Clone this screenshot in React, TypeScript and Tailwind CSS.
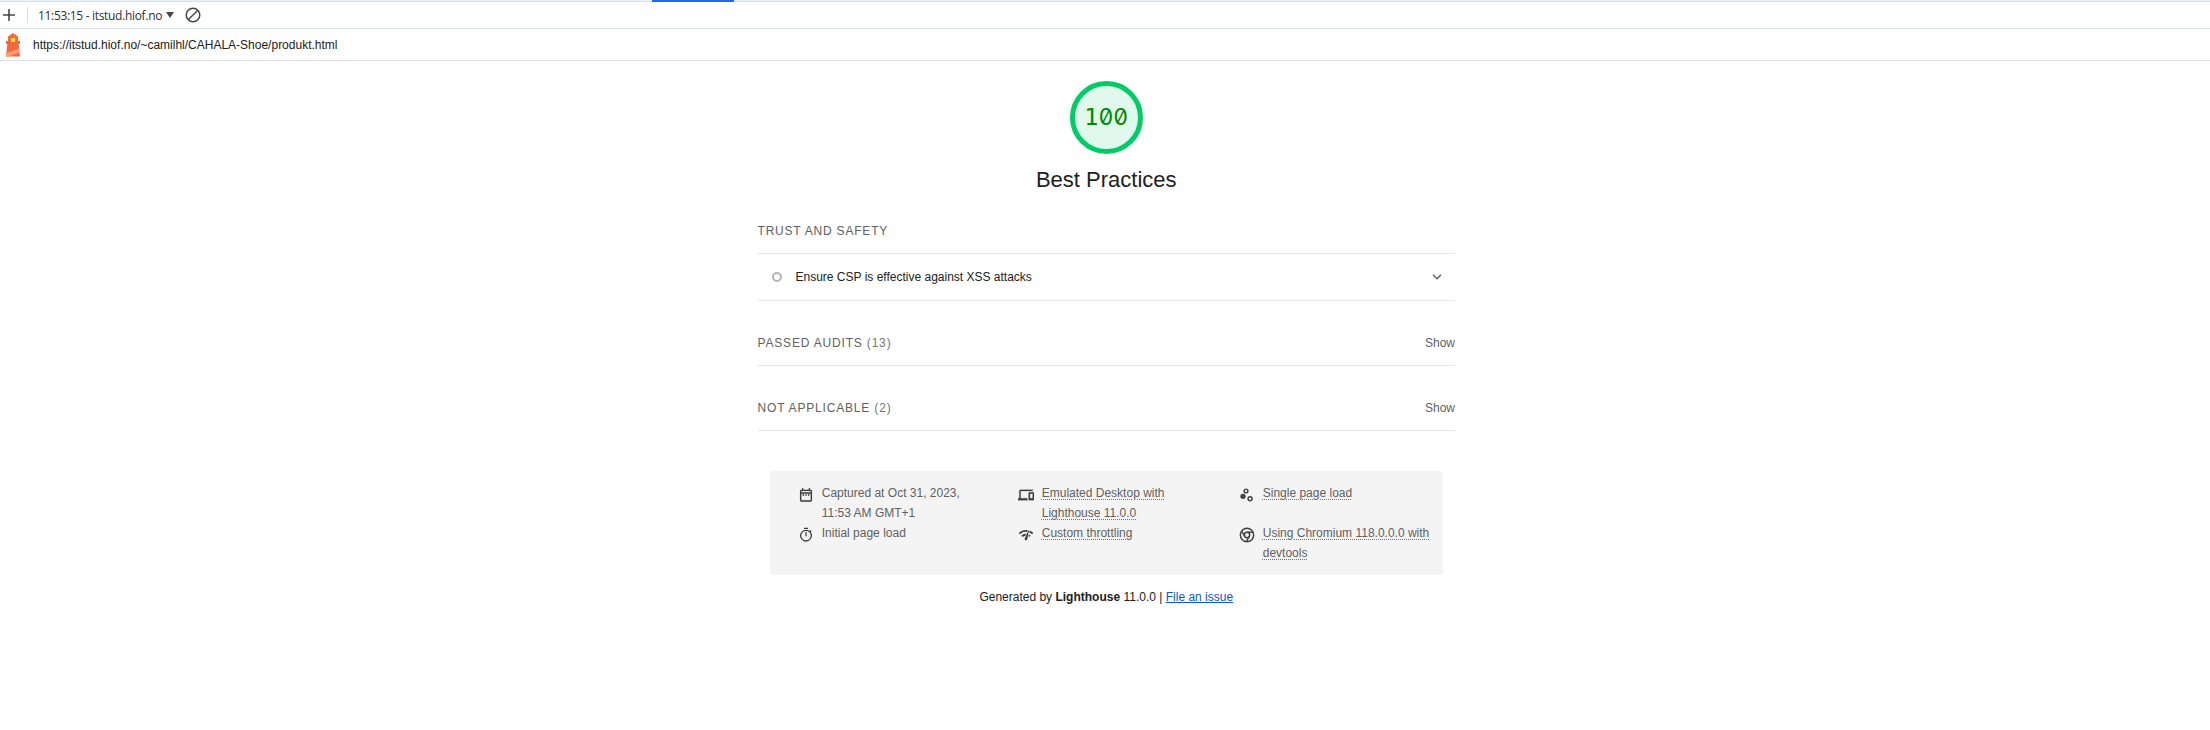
import type { ReactNode } from "react";

function Icon({ children }: { children: ReactNode }) {
  return (
    <svg viewBox="0 0 24 24" className="mt-[4px] h-4 w-4 shrink-0 fill-[#424242]">
      {children}
    </svg>
  );
}

const icons = {
  date: (
    <path stroke="#424242" strokeWidth=".2" d="M7 11h2v2H7zm14-5v14a2 2 0 0 1-2 2H5a2 2 0 0 1-2-2l.01-14c0-1.1.88-2 1.99-2h1V2h2v2h8V2h2v2h1a2 2 0 0 1 2 2zM5 8h14V6H5v2zm14 12V10H5v10h14zm-4-7h2v-2h-2v2zm-4 0h2v-2h-2v2z" />
  ),
  devices: (
    <path stroke="#424242" strokeWidth=".4" d="M4 6h18V4H4c-1.1 0-2 .9-2 2v11H0v3h14v-3H4V6zm19 2h-6c-.55 0-1 .45-1 1v10c0 .55.45 1 1 1h6c.55 0 1-.45 1-1V9c0-.55-.45-1-1-1zm-1 9h-4v-7h4v7z" />
  ),
  samples: (
    <>
      <circle cx="6" cy="14" r="4" />
      <circle cx="10.5" cy="6" r="2.8" fill="none" stroke="#424242" strokeWidth="2.2" />
      <circle cx="16.6" cy="17.6" r="3" fill="none" stroke="#424242" strokeWidth="2.2" />
    </>
  ),
  stopwatch: (
    <path d="M15 1H9v2h6V1zm-4 13h2V8h-2v6zm8.03-6.61 1.42-1.42c-.43-.51-.9-.99-1.41-1.41l-1.42 1.42A8.96 8.96 0 0 0 12 4a9 9 0 1 0 7.03 3.39zM12 20a7 7 0 1 1 0-14 7 7 0 0 1 0 14z" />
  ),
  network: (
    <path d="M15.9 5c-.17 0-.32.09-.41.23l-.07.15-5.18 11.65c-.16.29-.26.61-.26.96 0 1.11.9 2.01 2.01 2.01.96 0 1.77-.68 1.96-1.59l.01-.03L16.4 5.5c0-.28-.22-.5-.5-.5zM1 9l2 2c2.88-2.88 6.79-4.08 10.53-3.62l1.19-2.68C9.89 3.84 4.74 5.27 1 9zm20 2 2-2c-1.64-1.64-3.55-2.82-5.59-3.57l-.53 2.82c1.5.62 2.9 1.53 4.12 2.75zm-4 4 2-2c-.8-.8-1.7-1.42-2.66-1.89l-.55 2.92c.42.27.83.59 1.21.97zM5 13l2 2c1.13-1.13 2.56-1.79 4.03-2l1.28-2.88c-2.63-.08-5.3.87-7.31 2.88z" />
  ),
  chrome: (
    <g fill="none" stroke="#424242" strokeWidth="2.2">
      <circle cx="12" cy="12" r="10" />
      <circle cx="12" cy="12" r="4" />
      <path d="M12 8h9.2M8.54 14 3.9 6M15.46 14l-4.6 8" />
    </g>
  ),
};

function MetaItem({ icon, link, children }: { icon: keyof typeof icons; link?: boolean; children: ReactNode }) {
  return (
    <li className="flex gap-2">
      <Icon>{icons[icon]}</Icon>
      <span className="leading-5">
        {link ? (
          <span className="underline decoration-[#757575] decoration-dotted decoration-1 underline-offset-2">{children}</span>
        ) : (
          children
        )}
      </span>
    </li>
  );
}

function ClumpHeader({ title, count }: { title: string; count: number }) {
  return (
    <div className="flex h-[65px] items-end justify-between border-b border-[#e8e8e8] pb-[12px] leading-5 text-[#616161]">
      <span className="tracking-[0.82px]">
        {title} <span className="text-[#757575]">({count})</span>
      </span>
      <span>Show</span>
    </div>
  );
}

function Lighthouse() {
  return (
    <svg viewBox="0 0 16 24" className="h-6 w-4">
      <path d="M8 0 13 3.5V8h2v3h-1.4L15 23.5H1L2.4 11H1V8h2V3.5z" fill="#f4683c" />
      <path d="M14.1 15.5 14.6 19.5 4 23.5H1l.5-3.5z" fill="#ff9b76" />
      <rect x="6" y="5" width="4" height="4" fill="#ffe92b" />
    </svg>
  );
}

export default function App() {
  return (
    <div className="flex h-[730px] w-[2210px] flex-col bg-white font-['Liberation_Sans',Arial,sans-serif] text-[12px] text-[#212121]">
      <div className="h-[2px] shrink-0 border-b border-[#d3e0f5] bg-[#e9f1fd]">
        <div className="ml-[652px] h-[2px] w-[82px] bg-[#1a6bf0]" />
      </div>
      <header className="flex h-[27px] shrink-0 items-center border-b border-[#d9e0ef] font-['Open_Sans','Noto_Sans',sans-serif] text-[#303030]">
        <svg viewBox="0 0 12 12" className="ml-[3px] h-3 w-3" stroke="#474747" strokeWidth="1.6">
          <path d="M6 0v12M0 6h12" />
        </svg>
        <div className="ml-[12px] h-4 w-px bg-[#d3dcee]" />
        <span className="ml-[10px] w-[125px] whitespace-nowrap pt-px text-[12px] tracking-[-0.32px]">11:53:15 - itstud.hiof.no</span>
        <svg viewBox="0 0 8 6" className="ml-[3px] h-[6px] w-2 fill-[#474747]">
          <path d="M0 0h8L4 6z" />
        </svg>
        <svg viewBox="0 0 16 16" className="ml-[11px] h-4 w-4" fill="none" stroke="#474747" strokeWidth="1.5">
          <circle cx="8" cy="8" r="6.8" />
          <path d="M12.8 3.2 3.2 12.8" />
        </svg>
      </header>
      <div className="flex h-8 shrink-0 items-center border-b border-[#dcdce4] pl-[5px]">
        <Lighthouse />
        <span className="ml-3">https://itstud.hiof.no/~camilhl/CAHALA-Shoe/produkt.html</span>
      </div>
      <main className="ml-[757.5px] flex w-[697.5px] flex-col">
        <div className="mt-5 flex flex-col items-center">
          <div className="flex h-[73px] w-[73px] items-center justify-center rounded-full border-[5px] border-[#0c6] bg-[#e1f9ec] text-[23.5px] leading-none text-[#080]">
            <span className="flex items-baseline">
              <span className="font-['DejaVu_Sans_Mono',monospace]">1</span>
              <span className="font-['Inter',sans-serif] text-[23px] [font-feature-settings:'zero','tnum']">00</span>
            </span>
          </div>
          <h1 className="mt-[11px] text-[22px] leading-[30px]">Best Practices</h1>
        </div>
        <h2 className="mt-[26px] h-[33px] border-b border-[#e8e8e8] leading-5 tracking-[0.8px] text-[#616161]">TRUST AND SAFETY</h2>
        <div className="flex h-[47px] items-center border-b border-[#e8e8e8] pr-[13px] pl-[14px]">
          <span className="h-[10px] w-[10px] rounded-full border-2 border-[#b5b5b5]" />
          <span className="ml-[14px]">Ensure CSP is effective against XSS attacks</span>
          <svg viewBox="0 0 10 6" className="ml-auto h-[6px] w-[10px]" fill="none" stroke="#616161" strokeWidth="1.5">
            <path d="m1 .8 4 4 4-4" />
          </svg>
        </div>
        <ClumpHeader title="PASSED AUDITS" count={13} />
        <ClumpHeader title="NOT APPLICABLE" count={2} />
        <footer className="mt-[40px] flex flex-col items-center">
          <ul className="grid h-[104px] w-[673px] grid-cols-[220px_221px_1fr] content-start rounded-[3px] bg-[#f4f4f4] pt-[12px] pl-7 text-[#616161]">
            <MetaItem icon="date">Captured at Oct 31, 2023,<br />11:53 AM GMT+1</MetaItem>
            <MetaItem icon="devices" link>Emulated Desktop with<br />Lighthouse 11.0.0</MetaItem>
            <MetaItem icon="samples" link>Single page load</MetaItem>
            <MetaItem icon="stopwatch">Initial page load</MetaItem>
            <MetaItem icon="network" link>Custom throttling</MetaItem>
            <MetaItem icon="chrome" link>Using Chromium 118.0.0.0 with<br />devtools</MetaItem>
          </ul>
          <p className="mt-3 leading-5">
            Generated by <b>Lighthouse</b> 11.0.0 | <a className="text-[#0b57d0] underline">File an issue</a>
          </p>
        </footer>
      </main>
    </div>
  );
}
